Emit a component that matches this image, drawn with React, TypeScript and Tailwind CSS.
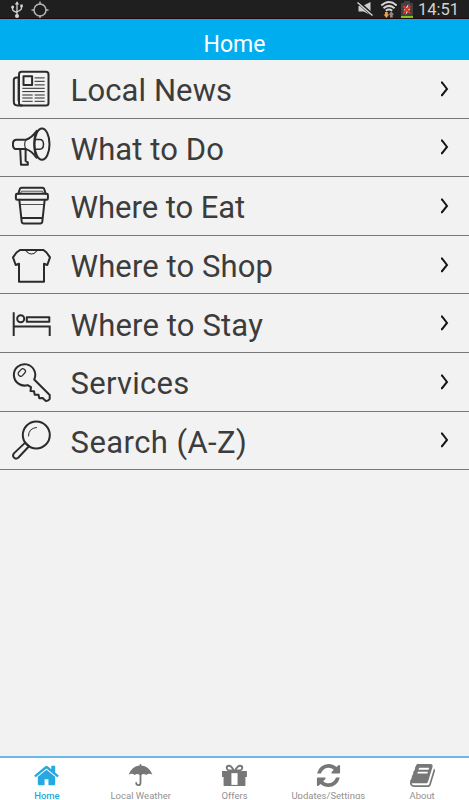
import type { ReactNode } from "react";

const rows: { label: string; tracking: string; icon: ReactNode }[] = [
  {
    label: "Local News",
    tracking: "tracking-[0.1px]",
    icon: (
      <>
        <rect x="7" y="2.8" width="29.5" height="33.6" rx="2.5" />
        <path d="M7 8.4H4.5Q1.8 8.4 1.8 11v21.8q0 3.6 3.6 3.6H10M6.6 9v22.5" />
        <rect x="11.5" y="7.3" width="8.6" height="8.6" />
        <path
          strokeWidth="1"
          d="M23 8.9h9.3M23 12.3h9.3M23 15.9h9.3M10.7 19.3h21.6M10.7 22.6h21.6M10.7 26h9.6M10.7 29h9.6M10.7 32.3h9.6M23 26h9.3M23 29h9.3M23 32.3h9.3"
        />
      </>
    ),
  },
  {
    label: "What to Do",
    tracking: "tracking-[0.1px]",
    icon: (
      <>
        <ellipse cx="30" cy="17.2" rx="7.5" ry="15.6" />
        <path d="M14 12.7H4.5Q.9 12.7.9 17.4t3.6 4.7H14M14 12.7q5.5-1.5 11-9M14 22.1q5.5 1.5 10.5 8.7M8.200 22.300l.8 15.500h6.800V35.300l-2.200-1.300V22.300" />
        <path d="M14 12.700q-2.800 4.700 0 9.400" strokeWidth="1.100" />
        <path d="M23.200 12.400h4.600q3.700 0 3.700 4.900t-3.700 4.900h-4.600M23.200 7q-2.500 10.200 0 20.500" strokeWidth="1.500" />
      </>
    ),
  },
  {
    label: "Where to Eat",
    tracking: "tracking-[-0.05px]",
    icon: (
      <>
        <path d="M6.400 7.700l1.300-4.500q.4-1.500 2-1.500h20.600q1.600 0 2 1.500l1.300 4.500" />
        <rect x="3.900" y="7.700" width="32" height="6" rx="1.200" />
        <path d="M7.300 13.700l2.400 22q.3 1.900 2 1.900h16.600q1.700 0 2-1.900l2.400-22M9.400 31.900h21.200" />
        <path d="M8 18.500h24M8.500 7.700l1-2.500h21l1 2.500" strokeWidth=".8" />
      </>
    ),
  },
  {
    label: "Where to Shop",
    tracking: "tracking-[0.1px]",
    icon: (
      <>
        <path d="M8 5h23.500l3 2.500 3.500 4.800-2.700 7.700-3.300-1.300v18H7v-18l-3.300 1.300L1 12.300l3.500-4.800z" />
        <path d="M13.700 5.500q5.700 7 11.600 0" strokeWidth="1.100" />
      </>
    ),
  },
  {
    label: "Where to Stay",
    tracking: "tracking-[0.15px]",
    icon: (
      <>
        <path d="M1.700 9.300V33M1.700 23.500h36V33" strokeLinejoin="miter" strokeLinecap="butt" />
        <circle cx="8.700" cy="15.700" r="3.500" />
        <rect x="14.800" y="14.200" width="22.500" height="4.500" />
      </>
    ),
  },
  {
    label: "Services",
    tracking: "tracking-[0.25px]",
    icon: (
      <>
        <path d="M22.200 17.500L37.700 33v4q-1.500 2.300-4.200 1.800L30.700 36l-3.400.2-.8-3.400h-3.800l-.6-3.500-3.600-.4.500-3.700-3.300-2.100A10.700 10.700 0 1 1 22.200 17.500z" />
        <rect x="7.300" y="6.500" width="5" height="8" rx="2.100" strokeWidth="1.200" transform="rotate(42 9.800 10.500)" />
      </>
    ),
  },
  {
    label: "Search (A-Z)",
    tracking: "tracking-[0.42px]",
    icon: (
      <>
        <circle cx="24.300" cy="15" r="13.500" />
        <path d="M16.500 16q0-7.800 8-8.500" strokeWidth="1" />
        <path d="M13.200 22.600L1.900 33.400q-1.700 2.300.1 4.200t4.200.2L17 26.300l-3.800-3.700" />
      </>
    ),
  },
];

const tabs: { label: string; active?: boolean; icon: ReactNode }[] = [
  {
    label: "Home",
    active: true,
    icon: (
      <path d="M1472 992v480q0 26-19 45t-45 19h-384v-384h-256v384h-384q-26 0-45-19t-19-45v-480q0-1 .5-3t.5-3l575-474 575 474q1 2 1 6zm223-69l-62 74q-8 9-21 11h-3q-13 0-21-7l-692-577-692 577q-12 8-24 7-13-2-21-11l-62-74q-8-10-7-23.500t11-21.500l719-599q32-26 76-26t76 26l244 204v-195q0-14 9-23t23-9h192q14 0 23 9t9 23v408l219 182q10 8 11 21.500t-7 23.500z" />
    ),
  },
  {
    label: "Local Weather",
    icon: (
      <>
        <path d="M896 130q55 0 55 60v45q500 35 740 610-210-130-410 10-190-130-330 0-55-40-110 0-140-130-330 0-200-140-410-10 240-575 740-610v-45q0-60 55-60z" />
        <path d="M896 780v590q0 170-140 170t-145-145" fill="none" stroke="currentColor" strokeWidth="120" strokeLinecap="round" />
      </>
    ),
  },
  {
    label: "Offers",
    icon: (
      <>
        <path d="M70 600h1650v400H1620v540q0 50-50 50H220q-50 0-50-50v-540H70z" />
        <path d="M690 740h410v780H690z" fill="white" />
        <path d="M870 590C770 390 650 230 500 250c-180 30-150 260 20 310h350zM920 590c100-200 220-360 370-340 180 30 150 260-20 310H920z" fill="none" stroke="currentColor" strokeWidth="125" />
      </>
    ),
  },
  {
    label: "Updates/Settings",
    icon: (
      <path d="M1639 1056q0 5-1 7-64 268-268 434.500t-478 166.500q-146 0-282.500-55t-243.500-157l-129 129q-19 19-45 19t-45-19-19-45v-448q0-26 19-45t45-19h448q26 0 45 19t19 45-19 45l-137 137q71 66 161 102t187 36q134 0 250-65t186-179q11-17 53-117 8-23 30-23h192q13 0 22.500 9.500t9.500 22.500zm25-800v448q0 26-19 45t-45 19h-448q-26 0-45-19t-19-45 19-45l138-138q-148-137-349-137-134 0-250 65t-186 179q-11 17-53 117-8 23-30 23h-199q-13 0-22.500-9.500t-9.500-22.500v-7q65-268 270-434.500t480-166.500q146 0 284 55.500t245 156.500l130-129q19-19 45-19t45 19 19 45z" />
    ),
  },
  {
    label: "About",
    icon: (
      <path d="M1703 478q40 57 18 129l-275 906q-19 64-76.500 107.500t-122.500 43.500h-923q-77 0-148.500-53.500t-99.500-131.500q-24-67-2-127 0-4 3-27t4-37q1-8-3-21.500t-3-19.500q2-11 8-21t16.500-23.500 16.500-23.500q23-38 45-91.500t30-91.500q3-10 .5-30t-.5-28q3-11 17-28t17-23q21-36 42-92t25-90q1-9-2.500-32t.5-28q4-13 22-30.500t22-22.500q19-26 42.500-84.500t27.500-96.500q1-8-3-25.500t-2-26.500q2-8 9-18t18-23 17-21q8-12 16.500-30.500t15-35 16-36 19.500-32 26.500-23.500 36-11.500 47.500 5.500l-1 3q38-9 51-9h761q74 0 114 56t18 130l-274 906q-36 119-71.500 153.500t-128.500 34.500h-869q-27 0-38 15-11 16-1 43 24 70 144 70h923q29 0 56-15.500t35-41.500l300-987q7-22 5-57 38 15 59 43zm-1064 2q-4 13 2 22.500t20 9.500h608q13 0 25.500-9.500t16.500-22.500l21-64q4-13-2-22.500t-20-9.500h-608q-13 0-25.500 9.500t-16.500 22.500zm-83 256q-4 13 2 22.500t20 9.500h608q13 0 25.500-9.500t16.500-22.500l21-64q4-13-2-22.500t-20-9.500h-608q-13 0-25.500 9.500t-16.500 22.500z" />
    ),
  },
];

function StatusBar() {
  return (
    <div className="flex h-[19px] shrink-0 items-center border-b border-[#260709] bg-[#1f1f1f] text-[#d2d2d2]">
      <svg className="ml-[10px] h-[18px] w-[14px]" viewBox="0 0 14 18" fill="none" stroke="currentColor" strokeWidth="1.300">
        <path d="M7 3v13M2.500 7v2q0 1.500 1.500 2.200l3 1.500M11.500 6v2q0 1.500-1.500 2.200L7 12" />
        <path d="M7 1.200l2.200 3.400H4.800zM10.300 4.500h2.500v2.700h-2.500z" fill="currentColor" stroke="none" />
        <circle cx="2.600" cy="7" r="1.500" fill="currentColor" stroke="none" />
        <circle cx="7" cy="16" r="2" fill="currentColor" stroke="none" />
      </svg>
      <svg className="ml-[7px] h-[18px] w-[18px]" viewBox="0 0 18 18" fill="none" stroke="#b5b5b5" strokeWidth="1.500">
        <circle cx="9" cy="10" r="6" />
        <path d="M9 1.500v3M9 15.500V18M.5 10h3M14.500 10h3" />
      </svg>
      <div className="ml-auto flex items-center">
        <svg className="h-[18px] w-[17px]" viewBox="0 0 17 18">
          <path d="M2.500 6h4L14.500 2v13l-7-3.500h-5z" fill="#cfcfcf" />
          <path d="M2 2l15 13.500" stroke="#1f1f1f" strokeWidth="3.500" />
          <path d="M1.500 2.500l15 13" stroke="#d5d5d5" strokeWidth="1.500" />
        </svg>
        <svg className="ml-[6px] h-[18px] w-[18px]" viewBox="0 0 18 18" fill="none" stroke="#d6d6d6" strokeWidth="2">
          <path d="M2.300 5.500q7.700-7 15.400 0M4.500 8.200q5.500-4.600 11 0M6.800 10.700q3.200-2.400 6.400 0" />
          <path d="M6 12h2.800v2.500h1.400l-2.800 3.500-2.800-3.500H6z" fill="#f1a03a" stroke="none" />
          <path d="M11 17.500h2.700v-2.800H15l-2.700-3.400-2.700 3.400H11z" fill="#8c8c8c" stroke="none" />
        </svg>
        <svg className="ml-[4px] h-[18px] w-[12px]" viewBox="0 0 12 18">
          <path d="M3 1h6v2h3v15H0V3h3z" fill="#424242" />
          <path d="M0 16h12v2H0z" fill="#80c41c" />
          <path d="M7.500 4L2.500 10.500h3L4.500 15l5-6.300h-3z" fill="#d8d8d8" />
          <path d="M2.300 6l7 7.300M9.300 6l-7 7.300" stroke="#db3525" strokeWidth="1.900" />
        </svg>
        <span className="mr-[9px] ml-[5px] w-[42px] pt-px text-[16.5px] leading-[18px] whitespace-nowrap">14:51</span>
      </div>
    </div>
  );
}

export default function App() {
  return (
    <div className="flex h-[800px] w-[469px] flex-col overflow-hidden bg-[#f2f2f2] font-['Roboto',sans-serif]">
      <StatusBar />

      <header className="flex h-[41px] shrink-0 items-center justify-center bg-[#00adef] pt-[11px] text-[23px] leading-8 text-white">
        Home
      </header>

      {/* Sections */}
      <main className="flex-1">
        {rows.map((row) => (
          <a key={row.label} className="flex h-[58.6px] items-center border-b border-[#777] pl-3">
            <svg
              className="h-10 w-10 shrink-0"
              viewBox="0 0 40 40"
              fill="none"
              stroke="#2b2b2b"
              strokeWidth="2"
              strokeLinecap="round"
              strokeLinejoin="round"
            >
              {row.icon}
            </svg>
            <span
              className={`ml-[18.6px] flex-1 pt-[5px] text-[31px] leading-10 whitespace-nowrap text-[#3c3c3c] ${row.tracking}`}
            >
              {row.label}
            </span>
            <svg className="mr-5 h-4 w-[10px]" viewBox="0 0 10 16" fill="none" stroke="#151515" strokeWidth="2">
              <path d="M2 1.500h1L8 8l-5 6.200H2" />
            </svg>
          </a>
        ))}
      </main>

      {/* Tab bar */}
      <nav className="grid h-11 shrink-0 grid-cols-5 border-t-2 border-[#69b8e9] bg-white">
        {tabs.map((tab) => (
          <a
            key={tab.label}
            className={`flex flex-col items-center pt-1 ${tab.active ? "text-[#25a9e0]" : "text-[#777]"}`}
          >
            <svg className="h-[27px] w-[27px] shrink-0" viewBox="0 0 1792 1792" fill="currentColor">
              {tab.icon}
            </svg>
            <span
              className={`h-[10px] overflow-hidden text-[9.5px] leading-[13px] whitespace-nowrap ${tab.active ? "font-medium" : "text-[#929292]"}`}
            >
              {tab.label}
            </span>
          </a>
        ))}
      </nav>
    </div>
  );
}
